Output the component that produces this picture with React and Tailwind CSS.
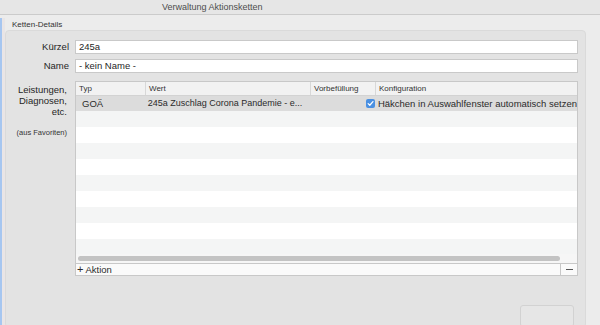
const rows = Array.from({ length: 10 });

const App = () => {
    return (
        <div
            className="w-[600px] h-[325px] overflow-hidden bg-[#ececec] flex flex-col text-[#262626]"
            style={{ fontFamily: '"Liberation Sans", Arial, sans-serif' }}
        >
            {/* Title bar */}
            <div className="h-[15px] shrink-0 bg-[#e6e6e6] border-b border-[#cbcbcb] flex items-center">
                <span className="pl-[162px] text-[9px] leading-none text-[#4d4d4d]">Verwaltung Aktionsketten</span>
            </div>

            <div className="flex-1 flex min-h-0">
                {/* left window edge */}
                <div className="w-[2px] bg-[#a6c6f0] mt-[3px]" />
                <div className="w-[3px] bg-[#e9e5e6] mt-[3px]" />

                <div className="flex-1 flex flex-col min-w-0 pr-[14px]">
                    <div className="h-[15px] shrink-0 flex items-end pl-[7px] pb-[1px]">
                        <span className="text-[8px] leading-none text-[#333]">Ketten-Details</span>
                    </div>

                    {/* Group box */}
                    <div className="flex-1 bg-[#e3e3e3] border border-[#dadada] rounded-[4px] pt-[9px] pr-[7px] flex flex-col">
                        <div className="flex items-center h-[14px]">
                            <div className="w-[64px] text-right text-[9.5px] leading-none pr-[1px]">Kürzel</div>
                            <div className="ml-[5px] flex-1 h-[14px] bg-white border border-[#c9c9c9] flex items-center pl-[3px] text-[9.5px] leading-none text-[#1f1f1f]">245a</div>
                        </div>
                        <div className="flex items-center h-[14px] mt-[5px]">
                            <div className="w-[64px] text-right text-[9.5px] leading-none pr-[1px]">Name</div>
                            <div className="ml-[5px] flex-1 h-[14px] bg-white border border-[#c9c9c9] flex items-center pl-[3px] text-[9.5px] leading-none text-[#1f1f1f]">- kein Name -</div>
                        </div>

                        <div className="flex mt-[8px]">
                            <div className="w-[64px] text-right pr-[3px] pt-[3px]">
                                <div className="text-[9.5px] leading-[11px]">Leistungen,</div>
                                <div className="text-[9.5px] leading-[11px]">Diagnosen,</div>
                                <div className="text-[9.5px] leading-[11px]">etc.</div>
                                <div className="text-[7.5px] leading-none mt-[12px] text-[#333]">(aus Favoriten)</div>
                            </div>

                            {/* Table */}
                            <div className="ml-[5px] flex-1 h-[195px] border border-[#c8c8c8] bg-white flex flex-col overflow-hidden">
                                <div className="h-[14px] shrink-0 flex bg-[#f2f2f2] border-b border-[#d3d3d3] text-[8px] leading-none text-[#333]">
                                    <div className="w-[70px] flex items-center pl-[3px] border-r border-[#d8d8d8]">Typ</div>
                                    <div className="w-[165px] flex items-center pl-[3px] border-r border-[#d8d8d8]">Wert</div>
                                    <div className="w-[65px] flex items-center pl-[3px] border-r border-[#d8d8d8]">Vorbefüllung</div>
                                    <div className="flex-1 flex items-center pl-[3px]">Konfiguration</div>
                                </div>
                                <div className="h-[15px] shrink-0 flex items-center bg-[#dcdcdc] text-[9.5px] leading-none text-[#2b2b2b]">
                                    <div className="w-[70px] pl-[6px]">GOÄ</div>
                                    <div className="w-[165px] pl-[6px] whitespace-nowrap text-[9px]">245a Zuschlag Corona Pandemie - e...</div>
                                    <div className="w-[65px]" />
                                    <div className="flex-1 flex items-center pl-[3px] whitespace-nowrap">
                                        <span className="w-[9px] h-[9px] rounded-[2px] bg-[#4a90e2] flex items-center justify-center mr-[3px]">
                                            <svg width="7" height="7" viewBox="0 0 8 8">
                                                <path d="M1.3 4.2 L3.2 6 L6.8 1.8" fill="none" stroke="white" strokeWidth="1.4" strokeLinecap="round" strokeLinejoin="round" />
                                            </svg>
                                        </span>
                                        Häkchen in Auswahlfenster automatisch setzen
                                    </div>
                                </div>
                                <div className="flex-1 min-h-0 overflow-hidden">
                                    {rows.map((_, i) => (
                                        <div key={i} className={i % 2 === 0 ? 'h-[16px] bg-[#f4f5f5]' : 'h-[16px] bg-white'} />
                                    ))}
                                </div>
                                <div className="h-[9px] shrink-0 bg-[#f6f6f6] flex items-center pl-[2px] pr-[17px]">
                                    <div className="flex-1 h-[5px] rounded-full bg-[#c3c3c3]" />
                                </div>
                                <div className="h-[12px] shrink-0 flex border-t border-[#c8c8c8] bg-[#fafafa]">
                                    <div className="flex-1 flex items-center pl-[1px] text-[9.5px] leading-none text-[#2b2b2b]">
                                        <span className="text-[11px] leading-none mr-[2px] -mt-[1px]">+</span>Aktion
                                    </div>
                                    <div className="w-[17px] border-l border-[#c8c8c8] flex items-center justify-center">
                                        <div className="w-[7px] h-[1.5px] bg-[#555]" />
                                    </div>
                                </div>
                            </div>
                        </div>

                        <div className="flex justify-end mt-[29px] pr-[4px]">
                            <div className="w-[54px] h-[22px] rounded-[3px] border border-[#d2d2d2] bg-[#e6e6e6]" />
                        </div>
                    </div>
                </div>
            </div>
        </div>
    );
};

export default App;
